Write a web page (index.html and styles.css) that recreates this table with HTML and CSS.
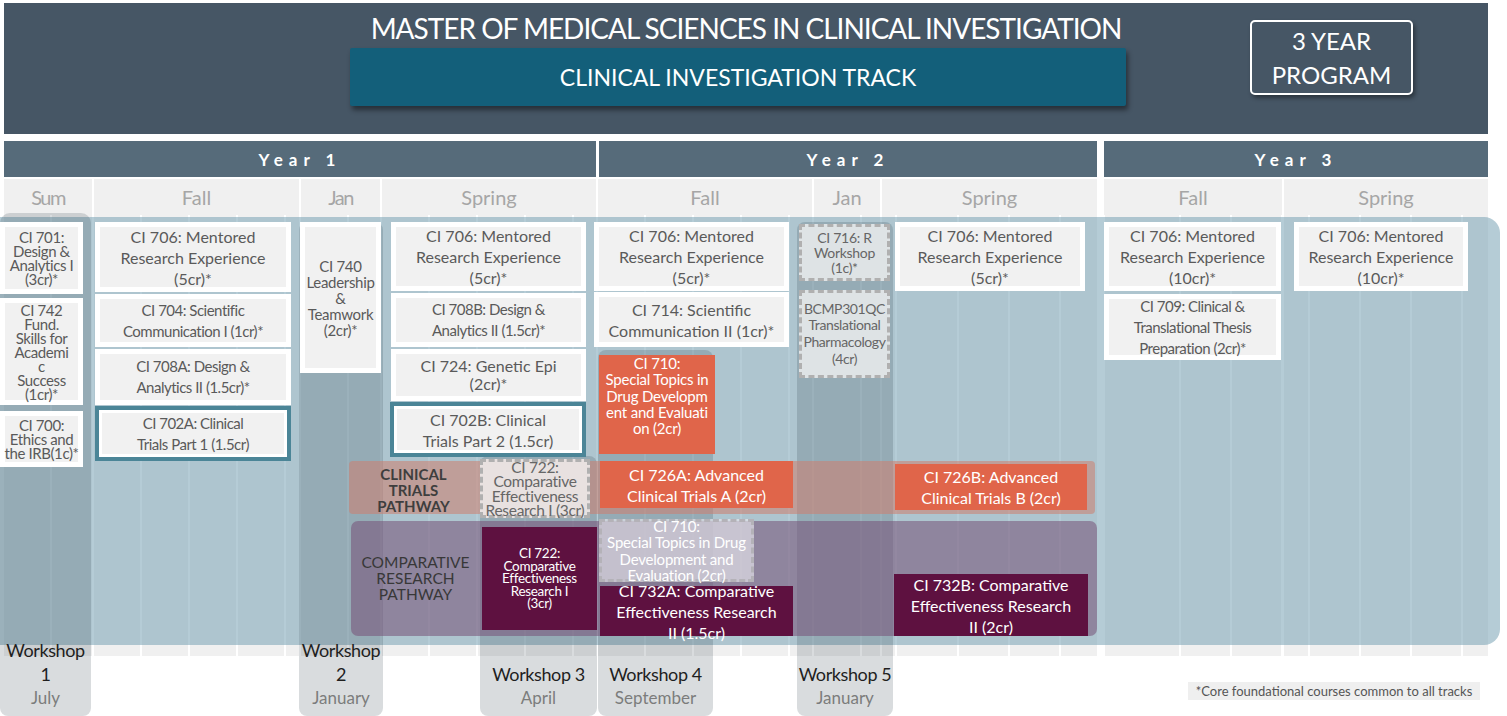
FILE: index.html
```html
<!DOCTYPE html>
<html lang="en">
<head>
<meta charset="utf-8">
<title>Clinical Investigation Track</title>
<link rel="stylesheet" href="styles.css">
</head>
<body>
<header class="banner">
  <div class="title">MASTER OF MEDICAL SCIENCES IN CLINICAL INVESTIGATION</div>
  <div class="track">CLINICAL INVESTIGATION TRACK</div>
  <div class="badge">3 YEAR<br>PROGRAM</div>
</header>

<div class="years">
  <div class="year y1">Year 1</div>
  <div class="year y2">Year 2</div>
  <div class="year y3">Year 3</div>
</div>

<main class="chart">
  <div class="cols">
    <div class="term t-sum"><div class="term-label narrow">Sum</div><div class="term-body"></div></div>
    <div class="term t-fall1"><div class="term-label">Fall</div><div class="term-body"></div></div>
    <div class="term t-jan1"><div class="term-label narrow">Jan</div><div class="term-body"></div></div>
    <div class="term t-spr1"><div class="term-label">Spring</div><div class="term-body"></div></div>
    <div class="term t-fall2"><div class="term-label">Fall</div><div class="term-body"></div></div>
    <div class="term t-jan2"><div class="term-label">Jan</div><div class="term-body"></div></div>
    <div class="term t-spr2"><div class="term-label">Spring</div><div class="term-body"></div></div>
    <div class="term t-fall3"><div class="term-label">Fall</div><div class="term-body"></div></div>
    <div class="term t-spr3"><div class="term-label">Spring</div><div class="term-body"></div></div>
  </div>

  <div class="field"></div>

  <div class="strip w1"><div class="ws">Workshop</div><div class="ws">1</div><div class="when">July</div></div>
  <div class="strip w2"><div class="ws">Workshop</div><div class="ws">2</div><div class="when">January</div></div>
  <div class="strip w3"><div class="ws">Workshop 3</div><div class="when">April</div></div>
  <div class="strip w4"><div class="ws">Workshop 4</div><div class="when">September</div></div>
  <div class="strip w5"><div class="ws">Workshop 5</div><div class="when">January</div></div>

  <div class="band band-ct"><div class="path-label ct">CLINICAL<br>TRIALS<br>PATHWAY</div></div>
  <div class="band band-cr"><div class="path-label cr">COMPARATIVE<br>RESEARCH<br>PATHWAY</div></div>

  <!-- Summer -->
  <div class="box sum c701">CI 701:<br>Design &amp;<br>Analytics I<br>(3cr)*</div>
  <div class="box sum c742">CI 742<br>Fund.<br>Skills for<br>Academi<br>c<br>Success<br>(1cr)*</div>
  <div class="box sum c700">CI 700:<br>Ethics and<br>the IRB(1c)*</div>

  <!-- Year 1 Fall -->
  <div class="box c706a">CI 706: Mentored<br>Research Experience<br>(5cr)*</div>
  <div class="box cond c704">CI 704: Scientific<br>Communication I (1cr)*</div>
  <div class="box cond c708a">CI 708A: Design &amp;<br>Analytics II (1.5cr)*</div>
  <div class="box teal cond c702a">CI 702A: Clinical<br>Trials Part 1 (1.5cr)</div>

  <!-- Year 1 Jan -->
  <div class="box c740">CI 740<br>Leadership<br>&amp;<br>Teamwork<br>(2cr)*</div>

  <!-- Year 1 Spring -->
  <div class="box c706b">CI 706: Mentored<br>Research Experience<br>(5cr)*</div>
  <div class="box cond c708b">CI 708B: Design &amp;<br>Analytics II (1.5cr)*</div>
  <div class="box c724">CI 724: Genetic Epi<br>(2cr)*</div>
  <div class="box teal c702b">CI 702B: Clinical<br>Trials Part 2 (1.5cr)</div>

  <div class="box dashed pink c722d">CI 722:<br>Comparative<br>Effectiveness<br>Research I (3cr)</div>
  <div class="box maroon c722m">CI 722:<br>Comparative<br>Effectiveness<br>Research I<br>(3cr)</div>

  <!-- Year 2 Fall -->
  <div class="box c706c">CI 706: Mentored<br>Research Experience<br>(5cr)*</div>
  <div class="box c714">CI 714: Scientific<br>Communication II (1cr)*</div>
  <div class="box orange c710o">CI 710:<br>Special Topics in<br>Drug Developm<br>ent and Evaluati<br>on (2cr)</div>
  <div class="box orange c726a">CI 726A: Advanced<br>Clinical Trials A (2cr)</div>
  <div class="box maroon c732a">CI 732A: Comparative<br>Effectiveness Research<br>II (1.5cr)</div>
  <div class="box dashed ghost c710g">CI 710:<br>Special Topics in Drug<br>Development and<br>Evaluation (2cr)</div>

  <!-- Year 2 Jan -->
  <div class="box dashed c716">CI 716: R<br>Workshop<br>(1c)*</div>
  <div class="box dashed c301">BCMP301QC<br>Translational<br>Pharmacology<br>(4cr)</div>

  <!-- Year 2 Spring -->
  <div class="box c706d">CI 706: Mentored<br>Research Experience<br>(5cr)*</div>
  <div class="box orange c726b">CI 726B: Advanced<br>Clinical Trials B (2cr)</div>
  <div class="box maroon c732b">CI 732B: Comparative<br>Effectiveness Research<br>II (2cr)</div>

  <!-- Year 3 -->
  <div class="box c706e">CI 706: Mentored<br>Research Experience<br>(10cr)*</div>
  <div class="box cond c709">CI 709: Clinical &amp;<br>Translational Thesis<br>Preparation (2cr)*</div>
  <div class="box c706f">CI 706: Mentored<br>Research Experience<br>(10cr)*</div>

  <div class="note">*Core foundational courses common to all tracks</div>
</main>
</body>
</html>
```

FILE: styles.css
```css
* { box-sizing: border-box; }

html, body {
  margin: 0;
  background: #ffffff;
}

body {
  width: 1507px;
  height: 716px;
  overflow: hidden;
  font-family: Lato, "Open Sans", sans-serif;
}

/* ---------- Banner ---------- */
.banner {
  position: relative;
  margin: 3px 0 0 4px;
  width: 1484px;
  height: 131px;
  background: #465665;
  display: flex;
  flex-direction: column;
  align-items: center;
  padding-top: 8px;
}

.title {
  color: #ffffff;
  font-size: 28px;
  line-height: 34px;
  letter-spacing: -1px;
  white-space: nowrap;
}

.track {
  margin-top: 3px;
  margin-right: 16px;
  width: 776px;
  height: 58px;
  background: #135f7a;
  color: #ffffff;
  font-size: 23px;
  display: flex;
  align-items: center;
  justify-content: center;
  border-radius: 2px;
  box-shadow: 2px 4px 5px rgba(0, 0, 0, 0.45);
}

.badge {
  position: absolute;
  left: 1246px;
  top: 17px;
  width: 163px;
  height: 75px;
  border: 2px solid #ffffff;
  border-radius: 5px;
  color: #ffffff;
  font-size: 24px;
  line-height: 34px;
  text-align: center;
  padding-top: 2px;
  box-shadow: 2px 3px 4px rgba(0, 0, 0, 0.4);
}

/* ---------- Years ---------- */
.years {
  display: flex;
  margin: 7px 0 0 4px;
  height: 36px;
}

.year {
  background: #566b7a;
  color: #ffffff;
  font-size: 17px;
  font-weight: 700;
  letter-spacing: 6px;
  display: flex;
  align-items: center;
  justify-content: center;
}

.y1 { width: 592px; }
.y2 { width: 498px; margin-left: 3px; }
.y3 { width: 384px; margin-left: 7px; }

/* ---------- Chart ---------- */
.chart {
  position: relative;
  margin-top: 2px;
  height: 537px;
}

.cols {
  display: flex;
  gap: 2px;
  padding-left: 4px;
}

.term {
  height: 477px;
  background: #f0f0f0;
  display: flex;
  flex-direction: column;
}

.term-label {
  height: 36px;
  flex: none;
  color: #a6a6a6;
  font-size: 20px;
  display: flex;
  align-items: center;
  justify-content: center;
}

.term-label.narrow { letter-spacing: -1.5px; }

.term-body {
  flex: 1;
  background: repeating-linear-gradient(90deg, transparent 0 46px, #ffffff 46px 48px);
}

.t-sum { width: 88px; }
.t-fall1 { width: 205px; }
.t-jan1 { width: 79px; }
.t-spr1 { width: 214px; }
.t-fall2 { width: 214px; }
.t-jan2 { width: 66px; }
.t-spr2 { width: 215px; }
.t-fall3 { width: 178px; margin-left: 5px; }
.t-spr3 { width: 204px; }

.t-fall3 .term-body,
.t-spr3 .term-body,
.t-spr2 .term-body {
  background: repeating-linear-gradient(90deg, transparent 0 49px, #ffffff 49px 51px);
  background-position: 26px 0;
}

/* blue field lying over the calendar */
.field {
  position: absolute;
  left: 0;
  top: 38px;
  width: 1500px;
  height: 428px;
  background: rgba(108, 154, 174, 0.5);
  border-radius: 0 16px 16px 0;
}

/* workshop strips */
.strip {
  position: absolute;
  background: rgba(20, 40, 50, 0.16);
  border-radius: 8px;
  display: flex;
  flex-direction: column;
  justify-content: flex-end;
  align-items: center;
  padding-bottom: 7px;
  text-align: center;
  white-space: nowrap;
}

.ws {
  font-size: 18px;
  line-height: 24px;
  color: #1f1f1f;
  letter-spacing: -0.4px;
}

.when {
  font-size: 17px;
  line-height: 23px;
  color: #7c7c7c;
}

.w1 { left: 0; top: 34px; width: 91px; height: 503px; border-radius: 10px 10px 8px 8px; }
.w2 { left: 299px; top: 43px; width: 84px; height: 494px; }
.w3 { left: 480px; top: 277px; width: 117px; height: 260px; }
.w4 { left: 598px; top: 171px; width: 115px; height: 366px; }
.w5 { left: 797px; top: 43px; width: 96px; height: 494px; }

/* pathway bands */
.band {
  position: absolute;
  display: flex;
}

.band-ct {
  left: 349px;
  top: 282px;
  width: 746px;
  height: 53px;
  background: rgba(205, 125, 110, 0.55);
  border-radius: 4px;
}

.band-cr {
  left: 351px;
  top: 342px;
  width: 746px;
  height: 115px;
  background: rgba(118, 80, 118, 0.55);
  border-radius: 7px;
}

.path-label {
  width: 129px;
  display: flex;
  align-items: center;
  justify-content: center;
  text-align: center;
  font-size: 15px;
  line-height: 16px;
  color: #383838;
}

.path-label.ct { font-weight: 700; padding-top: 4px; color: #3e3e3e; }
.path-label.cr { font-size: 15.5px; padding-bottom: 2px; }

/* ---------- Course boxes ---------- */
.box {
  position: absolute;
  display: flex;
  align-items: center;
  justify-content: center;
  text-align: center;
  white-space: nowrap;
  font-size: 16px;
  line-height: 21px;
  color: #5a5a5a;
  background: #f1f1f1;
  border: 5px solid #ffffff;
}

.box.cond { font-size: 15px; letter-spacing: -0.5px; }

.box.sum {
  font-size: 15px;
  line-height: 14px;
  letter-spacing: -0.4px;
}

.box.teal {
  border: 4px solid #4b8597;
  box-shadow: inset 0 0 0 3px #ffffff;
}

.box.orange {
  background: #e0654a;
  border: none;
  color: #ffffff;
}

.box.maroon {
  background: #5e1140;
  border: none;
  color: #ffffff;
}

.box.dashed {
  border: 3px dashed #b0b0b0;
  background: #dee3e5;
  color: #666666;
}

.box.pink { background: #e8e1e0; }

.box.ghost {
  background: rgba(236, 236, 241, 0.62);
  color: #ffffff;
  border-color: #b4b2b8;
}

/* summer */
.c701 { left: 0; top: 43px; width: 83px; height: 72px; }
.c742 { left: 0; top: 119px; width: 83px; height: 107px; }
.c700 { left: 0; top: 232px; width: 83px; height: 56px; }

/* year 1 fall */
.c706a { left: 95px; top: 43px; width: 196px; height: 70px; }
.c704 { left: 95px; top: 115px; width: 196px; height: 53px; }
.c708a { left: 95px; top: 170px; width: 196px; height: 56px; }
.c702a { left: 95px; top: 227px; width: 196px; height: 55px; }

/* year 1 jan */
.c740 { left: 300px; top: 43px; width: 81px; height: 151px; font-size: 15px; line-height: 16px; letter-spacing: -0.3px; }

/* year 1 spring */
.c706b { left: 391px; top: 43px; width: 195px; height: 69px; }
.c708b { left: 391px; top: 114px; width: 195px; height: 54px; }
.c724 { left: 391px; top: 170px; width: 195px; height: 52px; line-height: 18px; }
.c702b { left: 390px; top: 223px; width: 196px; height: 55px; }

.c722d { left: 480px; top: 280px; width: 110px; height: 59px; font-size: 15.5px; line-height: 14.3px; letter-spacing: -0.3px; }
.c722m { left: 482px; top: 348px; width: 115px; height: 103px; font-size: 13.5px; line-height: 12.5px; letter-spacing: -0.3px; }

/* year 2 fall */
.c706c { left: 594px; top: 43px; width: 195px; height: 69px; }
.c714 { left: 594px; top: 113px; width: 195px; height: 55px; }
.c710o { left: 599px; top: 176px; width: 116px; height: 99px; align-items: flex-start; font-size: 15px; line-height: 16.3px; letter-spacing: -0.2px; }
.c726a { left: 600px; top: 282px; width: 193px; height: 47px; }
.c732a { left: 600px; top: 407px; width: 193px; height: 50px; }
.c710g { left: 599px; top: 340px; width: 155px; height: 63px; font-size: 15px; line-height: 16.3px; letter-spacing: -0.2px; }

/* year 2 jan */
.c716 { left: 799px; top: 45px; width: 91px; height: 57px; font-size: 14px; line-height: 15px; letter-spacing: -0.3px; }
.c301 { left: 799px; top: 111px; width: 91px; height: 88px; font-size: 14px; line-height: 16.7px; letter-spacing: -0.4px; }

/* year 2 spring */
.c706d { left: 895px; top: 43px; width: 190px; height: 69px; }
.c726b { left: 895px; top: 285px; width: 192px; height: 46px; }
.c732b { left: 894px; top: 395px; width: 194px; height: 62px; }

/* year 3 */
.c706e { left: 1104px; top: 43px; width: 177px; height: 69px; }
.c709 { left: 1104px; top: 115px; width: 177px; height: 66px; }
.c706f { left: 1294px; top: 43px; width: 174px; height: 69px; }

.note {
  position: absolute;
  left: 1188px;
  top: 503px;
  width: 292px;
  height: 18px;
  background: #efefef;
  color: #555555;
  font-size: 13px;
  line-height: 18px;
  text-align: center;
  white-space: nowrap;
}
```
